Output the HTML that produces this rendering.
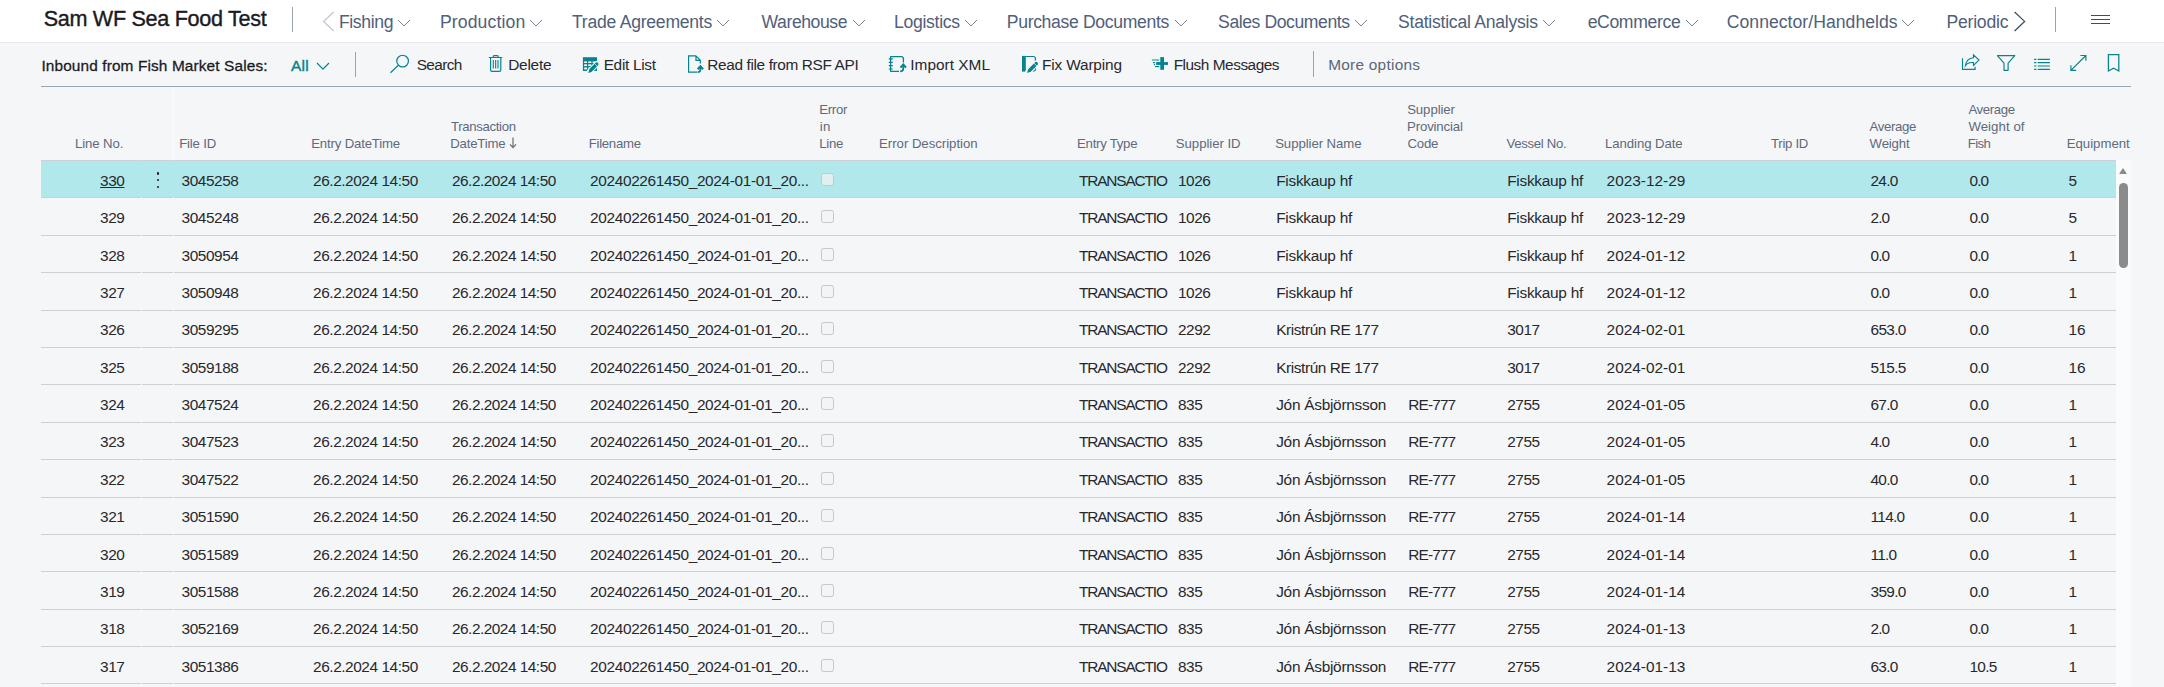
<!DOCTYPE html>
<html lang="en">
<head>
<meta charset="utf-8">
<title>Inbound from Fish Market Sales - Sam WF Sea Food Test</title>
<style>
*{box-sizing:border-box;margin:0;padding:0}
html,body{width:2164px;height:687px;overflow:hidden;background:#f5f6f8}
body{position:relative;font-family:"Liberation Sans",Arial,sans-serif;color:#28282c;-webkit-font-smoothing:antialiased}
.tx{position:absolute;white-space:nowrap;font-weight:400;text-decoration:none}
h1.tx,h2.tx{font-weight:400}
.ic{position:absolute;overflow:visible}
header.top{position:absolute;left:0;top:0;width:2164px;height:43px;background:#fff;border-bottom:1px solid #e9eaed}
.vsep{position:absolute;width:1px;background:#9aa3b0}
.burger{position:absolute;width:19px;height:10px}
.burger i{position:absolute;left:0;width:19px;height:1.2px;background:#3f4d63}
.burger i:nth-child(1){top:0}.burger i:nth-child(2){top:4.3px}.burger i:nth-child(3){top:8.6px}
section.bar{position:absolute;left:0;top:0;width:2164px;height:87px}
section.bar:after{content:"";position:absolute;left:41px;width:2090px;top:86px;height:1.2px;background:#9ba4b1}
.grid{position:absolute;left:0;top:0;width:2164px;height:687px}
.freeze{position:absolute;left:171px;top:87px;width:3px;height:73px;background:linear-gradient(90deg,rgba(255,255,255,0),rgba(255,255,255,.55))}
.track{position:absolute;left:2116px;top:160px;width:15px;height:527px;background:#fafbfc}
.track:before{content:"";position:absolute;left:3px;top:8px;border:4.5px solid transparent;border-top-width:0;border-bottom:6.6px solid #8a8a8a;border-radius:1px}
.track:after{content:"";position:absolute;left:3.2px;top:22.7px;width:8.8px;height:85.6px;border-radius:4.4px;background:#8b8b8b}
.row{position:absolute;left:41px;width:2075px;background:linear-gradient(90deg,#cdd0d5 0 100px,transparent 100px 101px,#cdd0d5 101px 132px,transparent 132px 133px,#cdd0d5 133px) 0 0/100% 1px no-repeat}
.row.sel{background-color:#b1e8ec}
.c{position:absolute;top:10px;font-size:15.4px;line-height:21px;white-space:nowrap;margin-left:-41px}
.up .c{top:9px}
.row .kk{letter-spacing:-0.41px}
.row .dg{letter-spacing:-0.45px}
.row .p3{letter-spacing:-0.95px}.row .p4{letter-spacing:-0.78px}.row .p5{letter-spacing:-0.7px}
.c_ln{margin-left:0;margin-right:41px;text-align:right}
.row .c_ln{right:auto}
.lnk{text-decoration:underline;text-underline-offset:.6px;text-decoration-thickness:1px}
.dots{position:absolute;left:115.6px;top:12.4px;width:2px;height:16px}
.dots i{position:absolute;left:-.1px;width:2.4px;height:2.4px;border-radius:50%;background:#1b1b1f}
.dots i:nth-child(1){top:0}.dots i:nth-child(2){top:6.7px}.dots i:nth-child(3){top:13.4px}
.cb{position:absolute;left:780px;top:12.5px;width:13px;height:13px;border:1px solid #c6c7c9;border-radius:2.5px;background:rgba(243,243,243,.7)}
.up .cb{top:11.5px}
.c_file{left:181.60px;letter-spacing:-0.450px}
.c_dt1{left:313.04px;letter-spacing:-0.430px}
.c_dt2{left:452.00px;letter-spacing:-0.500px}
.c_fn{left:590.04px;letter-spacing:-0.339px}
.c_et{left:1079.00px;letter-spacing:-1.137px}
.c_sid{left:1177.97px;letter-spacing:-0.450px}
.c_sn{left:1276.20px;letter-spacing:-0.266px}
.c_pc{left:1408.20px;letter-spacing:-0.840px}
.c_vn{left:1507.20px;letter-spacing:-0.266px}
.c_ld{left:1606.60px;letter-spacing:0.000px}
.c_aw{left:1870.60px;letter-spacing:-0.450px}
.c_af{left:1969.60px;letter-spacing:-0.450px}
.c_eq{left:2068.46px;letter-spacing:0.000px}
.c_ln{right:2039.11px;letter-spacing:-0.450px;margin-right:0.450px}
.row .c_ln{left:auto;right:1991.11px;margin:0 0.450px 0 0}
</style>
</head>
<body>
<section class="bar">
<h2 id="cap" class="tx" style="left:41.40px;top:55.66px;font-size:15.4px;line-height:20.0px;letter-spacing:0.123px;color:#1b1b1f;-webkit-text-stroke:0.28px currentColor;">Inbound from Fish Market Sales:</h2>
<span id="all" class="tx" style="left:290.91px;top:55.66px;font-size:15.4px;line-height:20.0px;letter-spacing:0.298px;color:#00838c;-webkit-text-stroke:0.4px currentColor;">All</span>
<svg class="ic" style="left:314.8px;top:61.3px" width="16.0" height="10.2" viewBox="-2 -2 16.0 10.2"><path d="M0 0 L6.00 6.2 L12.0 0" fill="none" stroke="#00838c" stroke-width="1.15"/></svg>
<span class="vsep" style="left:355px;top:52px;height:25px"></span>
<span id="act0" class="tx" style="left:416.73px;top:54.66px;font-size:15.4px;line-height:20.0px;letter-spacing:-0.610px;color:#28282c;">Search</span>
<span id="act1" class="tx" style="left:508.20px;top:54.66px;font-size:15.4px;line-height:20.0px;letter-spacing:-0.224px;color:#28282c;">Delete</span>
<span id="act2" class="tx" style="left:603.67px;top:54.66px;font-size:15.4px;line-height:20.0px;letter-spacing:-0.297px;color:#28282c;">Edit List</span>
<span id="act3" class="tx" style="left:707.31px;top:54.66px;font-size:15.4px;line-height:20.0px;letter-spacing:-0.367px;color:#28282c;">Read file from RSF API</span>
<span id="act4" class="tx" style="left:910.25px;top:54.66px;font-size:15.4px;line-height:20.0px;letter-spacing:0.021px;color:#28282c;">Import XML</span>
<span id="act5" class="tx" style="left:1042.03px;top:54.66px;font-size:15.4px;line-height:20.0px;letter-spacing:-0.154px;color:#28282c;">Fix Warping</span>
<span id="act6" class="tx" style="left:1173.67px;top:54.66px;font-size:15.4px;line-height:20.0px;letter-spacing:-0.473px;color:#28282c;">Flush Messages</span>
<span class="vsep" style="left:1313px;top:51px;height:26px"></span>
<span id="more" class="tx" style="left:1328.20px;top:54.66px;font-size:15.4px;line-height:20.0px;letter-spacing:0.255px;color:#5a6779;">More options</span>
<svg class="ic" style="left:388px;top:52px" width="24" height="24" viewBox="388 52 24 24" fill="none" stroke="#05838e" stroke-width="1.2"><circle cx="402.6" cy="61.1" r="5.85"/><path d="M398.4 65.3 L390.5 72.7"/></svg>
<svg class="ic" style="left:486px;top:52px" width="20" height="24" viewBox="486 52 20 24" fill="none" stroke="#05838e" stroke-width="1.2"><path d="M488.8 57.5 H502.3 M493.2 57.5 V56.6 Q493.2 55.7 494.1 55.7 H497.3 Q498.2 55.7 498.2 56.6 V57.5 M490.6 57.5 V69.9 Q490.6 71.3 492 71.3 H499.4 Q500.8 71.3 500.8 69.9 V57.5"/><path d="M493.3 60 V68.6 M495.65 60 V68.6 M498 60 V68.6" stroke-width="1.1"/></svg>
<svg class="ic" style="left:580px;top:54px" width="22" height="22" viewBox="580 54 22 22" fill="none" stroke="#05838e" stroke-width="1.2"><rect x="582.9" y="57.2" width="14.1" height="13.8" fill="#05838e" stroke="none"/><rect x="584.1" y="61.4" width="2.9" height="1.6" fill="#f5f6f8" stroke="none"/><rect x="584.1" y="64.3" width="2.9" height="1.8" fill="#f5f6f8" stroke="none"/><rect x="584.1" y="67.5" width="2.9" height="1.9" fill="#f5f6f8" stroke="none"/><rect x="588.2" y="61.4" width="3.2" height="1.6" fill="#f5f6f8" stroke="none"/><rect x="588.2" y="64.3" width="3.2" height="1.8" fill="#f5f6f8" stroke="none"/><rect x="588.2" y="67.5" width="3.2" height="1.9" fill="#f5f6f8" stroke="none"/><rect x="592.6" y="61.4" width="3.1" height="1.6" fill="#f5f6f8" stroke="none"/><rect x="592.6" y="64.3" width="3.1" height="1.8" fill="#f5f6f8" stroke="none"/><rect x="592.6" y="67.5" width="3.1" height="1.9" fill="#f5f6f8" stroke="none"/><path d="M597.2 63.6 L589.4 71.6" stroke="#f5f6f8" stroke-width="5.6" stroke-linecap="round"/><path d="M596.8 64 L591.2 69.8" stroke-width="3.4" stroke-linecap="round"/><path d="M594 62.9 L597.6 66.5" stroke="#f5f6f8" stroke-width=".7"/><path d="M589.5 69.1 L588.2 73 L592.1 71.7 Z" fill="#05838e" stroke="none"/></svg>
<svg class="ic" style="left:686px;top:53px" width="20" height="22" viewBox="686 53 20 22" fill="none" stroke="#05838e" stroke-width="1.2"><path d="M696 55.8 H688.6 V72.1 H697 M696 55.8 L700.3 60.3 V63.6 M696 55.8 V60.3 H700.3"/><path d="M697.6 72.1 Q700.4 72.1 700.4 69.4 V66.6" stroke-width="1.7"/><path d="M697.7 69.2 L700.4 66.2 L703.1 69.2" stroke-width="2.1"/></svg>
<svg class="ic" style="left:886px;top:53px" width="22" height="22" viewBox="886 53 22 22" fill="none" stroke="#05838e" stroke-width="1.2"><path d="M899 71.3 H890.6 V56.6 H902 L903.4 58 V62.6" stroke-width="1.3" stroke-linejoin="round"/><path d="M888.8 58.9 H892.8 M888.8 62.3 H892.8 M888.8 65.6 H892.8 M888.8 69 H892.8" stroke-width="1.15"/><path d="M900.2 71.3 Q903.3 71.3 903.3 68.4 V65" stroke-width="1.7"/><path d="M900.5 67.6 L903.3 64.5 L906 67.6" stroke-width="2.1"/></svg>
<svg class="ic" style="left:1020px;top:53px" width="22" height="22" viewBox="1020 53 22 22" fill="none" stroke="#05838e" stroke-width="1.2"><rect x="1022" y="55.9" width="3.8" height="15.7" fill="#05838e" stroke="none"/><path d="M1025.6 56.5 H1033.4 Q1035.4 56.5 1035.4 58.5 V61.5 M1025.6 71 H1027.5 M1035.4 67.5 V69.6 Q1035.4 71 1034 71 H1032.5"/><path d="M1036.6 63.2 L1028.2 71.7" stroke="#f5f6f8" stroke-width="5.6" stroke-linecap="round"/><path d="M1036.2 63.7 L1030.2 69.8" stroke-width="3.6" stroke-linecap="round"/><path d="M1033.4 62.6 L1037 66.2" stroke="#f5f6f8" stroke-width=".7"/><path d="M1028.3 69 L1026.9 73 L1031 71.6 Z" fill="#05838e" stroke="none"/></svg>
<svg class="ic" style="left:1150px;top:54px" width="20" height="20" viewBox="1150 54 20 20" fill="none" stroke="#05838e" stroke-width="1.2"><rect x="1156.1" y="62.1" width="11.9" height="2.8" fill="#05838e" stroke="none"/><rect x="1160.3" y="57.1" width="3.7" height="12.7" fill="#05838e" stroke="none"/><path d="M1151.9 60 H1159.2" stroke-opacity=".6" stroke-width="1.6"/><path d="M1153 62.6 H1155 M1153.9 64.6 H1155" stroke-width="1.1"/><path d="M1155 66.6 H1159.2" stroke-width="1.2"/></svg>
<svg class="ic" style="left:1959px;top:52px" width="24" height="22" viewBox="1959 52 24 22" fill="none" stroke="#05838e" stroke-width="1.15"><path d="M1962.5 58.2 V69.3 H1975.1 V66.7"/><path d="M1973.5 54.8 L1979 60.1 L1973.5 65.5 V62.6 Q1968 62 1965.4 65.6 Q1966.2 58.4 1973.5 57.7 Z" stroke-linejoin="miter"/></svg>
<svg class="ic" style="left:1995px;top:52px" width="22" height="22" viewBox="1995 52 22 22" fill="none" stroke="#05838e" stroke-width="1.15"><path d="M1997.4 55.6 H2014.8 L2008.1 63.2 V70.3 H2004 V63.2 Z" stroke-linejoin="round"/></svg>
<svg class="ic" style="left:2032px;top:54px" width="20" height="20" viewBox="2032 54 20 20" fill="none" stroke="#05838e" stroke-width="1.15"><path d="M2034.1 59.4 H2036.4 M2037.7 59.4 H2049.9 M2034.1 62.6 H2036.4 M2037.7 62.6 H2049.9 M2034.1 66.0 H2036.4 M2037.7 66.0 H2049.9 M2034.1 69.3 H2036.4 M2037.7 69.3 H2049.9 "/></svg>
<svg class="ic" style="left:2068px;top:52px" width="22" height="22" viewBox="2068 52 22 22" fill="none" stroke="#05838e" stroke-width="1.15"><path d="M2085.9 55.5 L2070.9 70.3 M2080.4 55.5 H2085.9 V60.8 M2070.9 65.2 V70.3 H2076.2"/></svg>
<svg class="ic" style="left:2105px;top:52px" width="18" height="24" viewBox="2105 52 18 24" fill="none" stroke="#05838e" stroke-width="1.25"><path d="M2108.4 71 V54.7 H2118.8 V71 L2113.6 68.3 Z" stroke-linejoin="miter"/></svg>
</section>
<div class="grid">
<div class="thead">
<span id="h_line" class="tx" style="left:75.08px;top:134.83px;font-size:13.2px;line-height:17.2px;letter-spacing:-0.120px;color:#5d6a7d;">Line No.</span>
<span id="h_file" class="tx" style="left:179.20px;top:134.83px;font-size:13.2px;line-height:17.2px;letter-spacing:-0.187px;color:#5d6a7d;">File ID</span>
<span id="h_entry" class="tx" style="left:311.20px;top:134.83px;font-size:13.2px;line-height:17.2px;letter-spacing:-0.162px;color:#5d6a7d;">Entry DateTime</span>
<span id="h_tr1" class="tx" style="left:451.00px;top:117.83px;font-size:13.2px;line-height:17.2px;letter-spacing:-0.336px;color:#5d6a7d;">Transaction</span>
<span id="h_tr2" class="tx" style="left:450.20px;top:134.83px;font-size:13.2px;line-height:17.2px;letter-spacing:-0.180px;color:#5d6a7d;">DateTime</span>
<span id="h_fn" class="tx" style="left:588.72px;top:134.83px;font-size:13.2px;line-height:17.2px;letter-spacing:-0.280px;color:#5d6a7d;">Filename</span>
<span id="h_e1" class="tx" style="left:819.20px;top:100.83px;font-size:13.2px;line-height:17.2px;letter-spacing:-0.280px;color:#5d6a7d;">Error</span>
<span id="h_e2" class="tx" style="left:819.66px;top:117.83px;font-size:13.2px;line-height:17.2px;letter-spacing:0.350px;color:#5d6a7d;">in</span>
<span id="h_e3" class="tx" style="left:819.20px;top:134.83px;font-size:13.2px;line-height:17.2px;letter-spacing:-0.233px;color:#5d6a7d;">Line</span>
<span id="h_ed" class="tx" style="left:879.08px;top:134.83px;font-size:13.2px;line-height:17.2px;letter-spacing:-0.028px;color:#5d6a7d;">Error Description</span>
<span id="h_et" class="tx" style="left:1077.08px;top:134.83px;font-size:13.2px;line-height:17.2px;letter-spacing:-0.264px;color:#5d6a7d;">Entry Type</span>
<span id="h_sid" class="tx" style="left:1175.79px;top:134.83px;font-size:13.2px;line-height:17.2px;letter-spacing:-0.037px;color:#5d6a7d;">Supplier ID</span>
<span id="h_sn" class="tx" style="left:1275.15px;top:134.83px;font-size:13.2px;line-height:17.2px;letter-spacing:-0.070px;color:#5d6a7d;">Supplier Name</span>
<span id="h_p1" class="tx" style="left:1407.15px;top:100.83px;font-size:13.2px;line-height:17.2px;letter-spacing:-0.073px;color:#5d6a7d;">Supplier</span>
<span id="h_p2" class="tx" style="left:1407.08px;top:117.83px;font-size:13.2px;line-height:17.2px;letter-spacing:-0.156px;color:#5d6a7d;">Provincial</span>
<span id="h_p3" class="tx" style="left:1407.60px;top:134.83px;font-size:13.2px;line-height:17.2px;letter-spacing:-0.280px;color:#5d6a7d;">Code</span>
<span id="h_vn" class="tx" style="left:1506.60px;top:134.83px;font-size:13.2px;line-height:17.2px;letter-spacing:-0.341px;color:#5d6a7d;">Vessel No.</span>
<span id="h_ld" class="tx" style="left:1605.08px;top:134.83px;font-size:13.2px;line-height:17.2px;letter-spacing:-0.076px;color:#5d6a7d;">Landing Date</span>
<span id="h_tid" class="tx" style="left:1771.00px;top:134.83px;font-size:13.2px;line-height:17.2px;letter-spacing:-0.280px;color:#5d6a7d;">Trip ID</span>
<span id="h_a1" class="tx" style="left:1869.60px;top:117.83px;font-size:13.2px;line-height:17.2px;letter-spacing:-0.350px;color:#5d6a7d;">Average</span>
<span id="h_a2" class="tx" style="left:1869.60px;top:134.83px;font-size:13.2px;line-height:17.2px;letter-spacing:-0.168px;color:#5d6a7d;">Weight</span>
<span id="h_f1" class="tx" style="left:1968.40px;top:100.83px;font-size:13.2px;line-height:17.2px;letter-spacing:-0.350px;color:#5d6a7d;">Average</span>
<span id="h_f2" class="tx" style="left:1968.40px;top:117.83px;font-size:13.2px;line-height:17.2px;letter-spacing:0.085px;color:#5d6a7d;">Weight of</span>
<span id="h_f3" class="tx" style="left:1967.72px;top:134.83px;font-size:13.2px;line-height:17.2px;letter-spacing:-0.580px;color:#5d6a7d;">Fish</span>
<span id="h_eq" class="tx" style="left:2066.72px;top:134.83px;font-size:13.2px;line-height:17.2px;color:#5d6a7d;">Equipment</span>
<svg class="ic" style="left:509px;top:137px" width="8" height="12" viewBox="0 0 8 12"><path d="M4 .5 V10.4 M1 7.3 L4 10.6 L7 7.3" fill="none" stroke="#6c6f75" stroke-width="1.25"/></svg>
</div>
<div class="freeze"></div>
<div class="tbody">
<div class="row sel" style="top:160px;height:37px"><span id="fit_c_ln" class="c c_ln lnk">330</span><span class="dots"><i></i><i></i><i></i></span><span id="fit_c_file" class="c c_file">3045258</span><span id="fit_c_dt1" class="c c_dt1">26.2.2024 14:50</span><span id="fit_c_dt2" class="c c_dt2">26.2.2024 14:50</span><span id="fit_c_fn" class="c c_fn">202402261450_2024-01-01_20...</span><span id="fit_c_et" class="c c_et">TRANSACTIO</span><span id="fit_c_sid" class="c c_sid">1026</span><span id="fit_c_sn" class="c c_sn">Fiskkaup hf</span><span id="fit_c_vn" class="c c_vn">Fiskkaup hf</span><span id="fit_c_ld" class="c c_ld">2023-12-29</span><span id="fit_c_aw" class="c c_aw p4">24.0</span><span id="fit_c_af" class="c c_af p3">0.0</span><span id="fit_c_eq" class="c c_eq">5</span><span class="cb"></span></div>
<div class="row" style="top:197px;height:38px"><span class="c c_ln">329</span><span class="c c_file">3045248</span><span class="c c_dt1">26.2.2024 14:50</span><span class="c c_dt2">26.2.2024 14:50</span><span class="c c_fn">202402261450_2024-01-01_20...</span><span class="c c_et">TRANSACTIO</span><span class="c c_sid">1026</span><span class="c c_sn">Fiskkaup hf</span><span class="c c_vn">Fiskkaup hf</span><span class="c c_ld">2023-12-29</span><span class="c c_aw p3">2.0</span><span class="c c_af p3">0.0</span><span class="c c_eq">5</span><span class="cb"></span></div>
<div class="row" style="top:235px;height:37px"><span class="c c_ln">328</span><span class="c c_file">3050954</span><span class="c c_dt1">26.2.2024 14:50</span><span class="c c_dt2">26.2.2024 14:50</span><span class="c c_fn">202402261450_2024-01-01_20...</span><span class="c c_et">TRANSACTIO</span><span class="c c_sid">1026</span><span class="c c_sn">Fiskkaup hf</span><span class="c c_vn">Fiskkaup hf</span><span class="c c_ld">2024-01-12</span><span class="c c_aw p3">0.0</span><span class="c c_af p3">0.0</span><span class="c c_eq">1</span><span class="cb"></span></div>
<div class="row" style="top:272px;height:38px"><span class="c c_ln">327</span><span class="c c_file">3050948</span><span class="c c_dt1">26.2.2024 14:50</span><span class="c c_dt2">26.2.2024 14:50</span><span class="c c_fn">202402261450_2024-01-01_20...</span><span class="c c_et">TRANSACTIO</span><span class="c c_sid">1026</span><span class="c c_sn">Fiskkaup hf</span><span class="c c_vn">Fiskkaup hf</span><span class="c c_ld">2024-01-12</span><span class="c c_aw p3">0.0</span><span class="c c_af p3">0.0</span><span class="c c_eq">1</span><span class="cb"></span></div>
<div class="row up" style="top:310px;height:37px"><span class="c c_ln">326</span><span class="c c_file">3059295</span><span class="c c_dt1">26.2.2024 14:50</span><span class="c c_dt2">26.2.2024 14:50</span><span class="c c_fn">202402261450_2024-01-01_20...</span><span class="c c_et">TRANSACTIO</span><span class="c c_sid">2292</span><span class="c c_sn kk">Kristrún RE 177</span><span class="c c_vn dg">3017</span><span class="c c_ld">2024-02-01</span><span class="c c_aw p5">653.0</span><span class="c c_af p3">0.0</span><span class="c c_eq">16</span><span class="cb"></span></div>
<div class="row" style="top:347px;height:37px"><span class="c c_ln">325</span><span class="c c_file">3059188</span><span class="c c_dt1">26.2.2024 14:50</span><span class="c c_dt2">26.2.2024 14:50</span><span class="c c_fn">202402261450_2024-01-01_20...</span><span class="c c_et">TRANSACTIO</span><span class="c c_sid">2292</span><span class="c c_sn kk">Kristrún RE 177</span><span class="c c_vn dg">3017</span><span class="c c_ld">2024-02-01</span><span class="c c_aw p5">515.5</span><span class="c c_af p3">0.0</span><span class="c c_eq">16</span><span class="cb"></span></div>
<div class="row" style="top:384px;height:38px"><span class="c c_ln">324</span><span class="c c_file">3047524</span><span class="c c_dt1">26.2.2024 14:50</span><span class="c c_dt2">26.2.2024 14:50</span><span class="c c_fn">202402261450_2024-01-01_20...</span><span class="c c_et">TRANSACTIO</span><span class="c c_sid">835</span><span class="c c_sn">Jón Ásbjörnsson</span><span id="fit_c_pc" class="c c_pc">RE-777</span><span class="c c_vn dg">2755</span><span class="c c_ld">2024-01-05</span><span class="c c_aw p4">67.0</span><span class="c c_af p3">0.0</span><span class="c c_eq">1</span><span class="cb"></span></div>
<div class="row up" style="top:422px;height:37px"><span class="c c_ln">323</span><span class="c c_file">3047523</span><span class="c c_dt1">26.2.2024 14:50</span><span class="c c_dt2">26.2.2024 14:50</span><span class="c c_fn">202402261450_2024-01-01_20...</span><span class="c c_et">TRANSACTIO</span><span class="c c_sid">835</span><span class="c c_sn">Jón Ásbjörnsson</span><span class="c c_pc">RE-777</span><span class="c c_vn dg">2755</span><span class="c c_ld">2024-01-05</span><span class="c c_aw p3">4.0</span><span class="c c_af p3">0.0</span><span class="c c_eq">1</span><span class="cb"></span></div>
<div class="row" style="top:459px;height:38px"><span class="c c_ln">322</span><span class="c c_file">3047522</span><span class="c c_dt1">26.2.2024 14:50</span><span class="c c_dt2">26.2.2024 14:50</span><span class="c c_fn">202402261450_2024-01-01_20...</span><span class="c c_et">TRANSACTIO</span><span class="c c_sid">835</span><span class="c c_sn">Jón Ásbjörnsson</span><span class="c c_pc">RE-777</span><span class="c c_vn dg">2755</span><span class="c c_ld">2024-01-05</span><span class="c c_aw p4">40.0</span><span class="c c_af p3">0.0</span><span class="c c_eq">1</span><span class="cb"></span></div>
<div class="row up" style="top:497px;height:37px"><span class="c c_ln">321</span><span class="c c_file">3051590</span><span class="c c_dt1">26.2.2024 14:50</span><span class="c c_dt2">26.2.2024 14:50</span><span class="c c_fn">202402261450_2024-01-01_20...</span><span class="c c_et">TRANSACTIO</span><span class="c c_sid">835</span><span class="c c_sn">Jón Ásbjörnsson</span><span class="c c_pc">RE-777</span><span class="c c_vn dg">2755</span><span class="c c_ld">2024-01-14</span><span class="c c_aw p5">114.0</span><span class="c c_af p3">0.0</span><span class="c c_eq">1</span><span class="cb"></span></div>
<div class="row" style="top:534px;height:37px"><span class="c c_ln">320</span><span class="c c_file">3051589</span><span class="c c_dt1">26.2.2024 14:50</span><span class="c c_dt2">26.2.2024 14:50</span><span class="c c_fn">202402261450_2024-01-01_20...</span><span class="c c_et">TRANSACTIO</span><span class="c c_sid">835</span><span class="c c_sn">Jón Ásbjörnsson</span><span class="c c_pc">RE-777</span><span class="c c_vn dg">2755</span><span class="c c_ld">2024-01-14</span><span class="c c_aw p4">11.0</span><span class="c c_af p3">0.0</span><span class="c c_eq">1</span><span class="cb"></span></div>
<div class="row" style="top:571px;height:38px"><span class="c c_ln">319</span><span class="c c_file">3051588</span><span class="c c_dt1">26.2.2024 14:50</span><span class="c c_dt2">26.2.2024 14:50</span><span class="c c_fn">202402261450_2024-01-01_20...</span><span class="c c_et">TRANSACTIO</span><span class="c c_sid">835</span><span class="c c_sn">Jón Ásbjörnsson</span><span class="c c_pc">RE-777</span><span class="c c_vn dg">2755</span><span class="c c_ld">2024-01-14</span><span class="c c_aw p5">359.0</span><span class="c c_af p3">0.0</span><span class="c c_eq">1</span><span class="cb"></span></div>
<div class="row up" style="top:609px;height:37px"><span class="c c_ln">318</span><span class="c c_file">3052169</span><span class="c c_dt1">26.2.2024 14:50</span><span class="c c_dt2">26.2.2024 14:50</span><span class="c c_fn">202402261450_2024-01-01_20...</span><span class="c c_et">TRANSACTIO</span><span class="c c_sid">835</span><span class="c c_sn">Jón Ásbjörnsson</span><span class="c c_pc">RE-777</span><span class="c c_vn dg">2755</span><span class="c c_ld">2024-01-13</span><span class="c c_aw p3">2.0</span><span class="c c_af p3">0.0</span><span class="c c_eq">1</span><span class="cb"></span></div>
<div class="row" style="top:646px;height:37px"><span class="c c_ln">317</span><span class="c c_file">3051386</span><span class="c c_dt1">26.2.2024 14:50</span><span class="c c_dt2">26.2.2024 14:50</span><span class="c c_fn">202402261450_2024-01-01_20...</span><span class="c c_et">TRANSACTIO</span><span class="c c_sid">835</span><span class="c c_sn">Jón Ásbjörnsson</span><span class="c c_pc">RE-777</span><span class="c c_vn dg">2755</span><span class="c c_ld">2024-01-13</span><span class="c c_aw p4">63.0</span><span class="c c_af p4">10.5</span><span class="c c_eq">1</span><span class="cb"></span></div>
<div class="row end" style="top:683px;height:4px"></div>
</div>
<div class="track"></div>
</div>
<header class="top">
<h1 id="title" class="tx" style="left:43.67px;top:4.67px;font-size:21.6px;line-height:28.1px;letter-spacing:-0.302px;color:#1b1b1f;-webkit-text-stroke:0.38px currentColor;">Sam WF Sea Food Test</h1>
<span class="vsep" style="left:292px;top:7px;height:25px"></span>
<svg class="ic" style="left:322px;top:11px" width="14" height="22" viewBox="0 0 14 22"><path d="M11.6 1 L1.6 10.5 L11.6 20" fill="none" stroke="#c3c8cf" stroke-width="1.25"/></svg>
<nav><a id="nav0" class="tx" style="left:338.90px;top:10.85px;font-size:17.6px;line-height:22.9px;letter-spacing:-0.341px;color:#50607b;">Fishing</a><svg class="ic" style="left:396.4px;top:18.1px" width="16.0" height="9.9" viewBox="-2 -2 16.0 9.9"><path d="M0 0 L6.00 5.9 L12.0 0" fill="none" stroke="#6a7990" stroke-width="0.95"/></svg><a id="nav1" class="tx" style="left:439.90px;top:10.85px;font-size:17.6px;line-height:22.9px;letter-spacing:0.134px;color:#50607b;">Production</a><svg class="ic" style="left:528.0px;top:18.1px" width="16.0" height="9.9" viewBox="-2 -2 16.0 9.9"><path d="M0 0 L6.00 5.9 L12.0 0" fill="none" stroke="#6a7990" stroke-width="0.95"/></svg><a id="nav2" class="tx" style="left:572.00px;top:10.85px;font-size:17.6px;line-height:22.9px;letter-spacing:-0.254px;color:#50607b;">Trade Agreements</a><svg class="ic" style="left:715.4px;top:18.1px" width="16.0" height="9.9" viewBox="-2 -2 16.0 9.9"><path d="M0 0 L6.00 5.9 L12.0 0" fill="none" stroke="#6a7990" stroke-width="0.95"/></svg><a id="nav3" class="tx" style="left:761.60px;top:10.85px;font-size:17.6px;line-height:22.9px;letter-spacing:-0.437px;color:#50607b;">Warehouse</a><svg class="ic" style="left:850.8px;top:18.1px" width="16.0" height="9.9" viewBox="-2 -2 16.0 9.9"><path d="M0 0 L6.00 5.9 L12.0 0" fill="none" stroke="#6a7990" stroke-width="0.95"/></svg><a id="nav4" class="tx" style="left:893.90px;top:10.85px;font-size:17.6px;line-height:22.9px;letter-spacing:-0.285px;color:#50607b;">Logistics</a><svg class="ic" style="left:963.4px;top:18.1px" width="16.0" height="9.9" viewBox="-2 -2 16.0 9.9"><path d="M0 0 L6.00 5.9 L12.0 0" fill="none" stroke="#6a7990" stroke-width="0.95"/></svg><a id="nav5" class="tx" style="left:1006.80px;top:10.85px;font-size:17.6px;line-height:22.9px;letter-spacing:-0.337px;color:#50607b;">Purchase Documents</a><svg class="ic" style="left:1172.8px;top:18.1px" width="16.0" height="9.9" viewBox="-2 -2 16.0 9.9"><path d="M0 0 L6.00 5.9 L12.0 0" fill="none" stroke="#6a7990" stroke-width="0.95"/></svg><a id="nav6" class="tx" style="left:1218.07px;top:10.85px;font-size:17.6px;line-height:22.9px;letter-spacing:-0.421px;color:#50607b;">Sales Documents</a><svg class="ic" style="left:1353.4px;top:18.1px" width="16.0" height="9.9" viewBox="-2 -2 16.0 9.9"><path d="M0 0 L6.00 5.9 L12.0 0" fill="none" stroke="#6a7990" stroke-width="0.95"/></svg><a id="nav7" class="tx" style="left:1398.07px;top:10.85px;font-size:17.6px;line-height:22.9px;letter-spacing:-0.251px;color:#50607b;">Statistical Analysis</a><svg class="ic" style="left:1540.8px;top:18.1px" width="16.0" height="9.9" viewBox="-2 -2 16.0 9.9"><path d="M0 0 L6.00 5.9 L12.0 0" fill="none" stroke="#6a7990" stroke-width="0.95"/></svg><a id="nav8" class="tx" style="left:1587.65px;top:10.85px;font-size:17.6px;line-height:22.9px;letter-spacing:-0.347px;color:#50607b;">eCommerce</a><svg class="ic" style="left:1684.0px;top:18.1px" width="16.0" height="9.9" viewBox="-2 -2 16.0 9.9"><path d="M0 0 L6.00 5.9 L12.0 0" fill="none" stroke="#6a7990" stroke-width="0.95"/></svg><a id="nav9" class="tx" style="left:1726.77px;top:10.85px;font-size:17.6px;line-height:22.9px;letter-spacing:0.035px;color:#50607b;">Connector/Handhelds</a><svg class="ic" style="left:1900.4px;top:18.1px" width="16.0" height="9.9" viewBox="-2 -2 16.0 9.9"><path d="M0 0 L6.00 5.9 L12.0 0" fill="none" stroke="#6a7990" stroke-width="0.95"/></svg><a id="nav10" class="tx" style="left:1946.44px;top:10.85px;font-size:17.6px;line-height:22.9px;letter-spacing:-0.217px;color:#50607b;">Periodic</a></nav>
<svg class="ic" style="left:2013px;top:11px" width="14" height="22" viewBox="0 0 14 22"><path d="M1.6 1 L11.6 10.4 L1.6 20" fill="none" stroke="#3f4d63" stroke-width="1.3"/></svg>
<span class="vsep" style="left:2055px;top:7px;height:25px"></span>
<span class="burger" style="left:2091px;top:14.5px"><i></i><i></i><i></i></span>
</header>
</body>
</html>
